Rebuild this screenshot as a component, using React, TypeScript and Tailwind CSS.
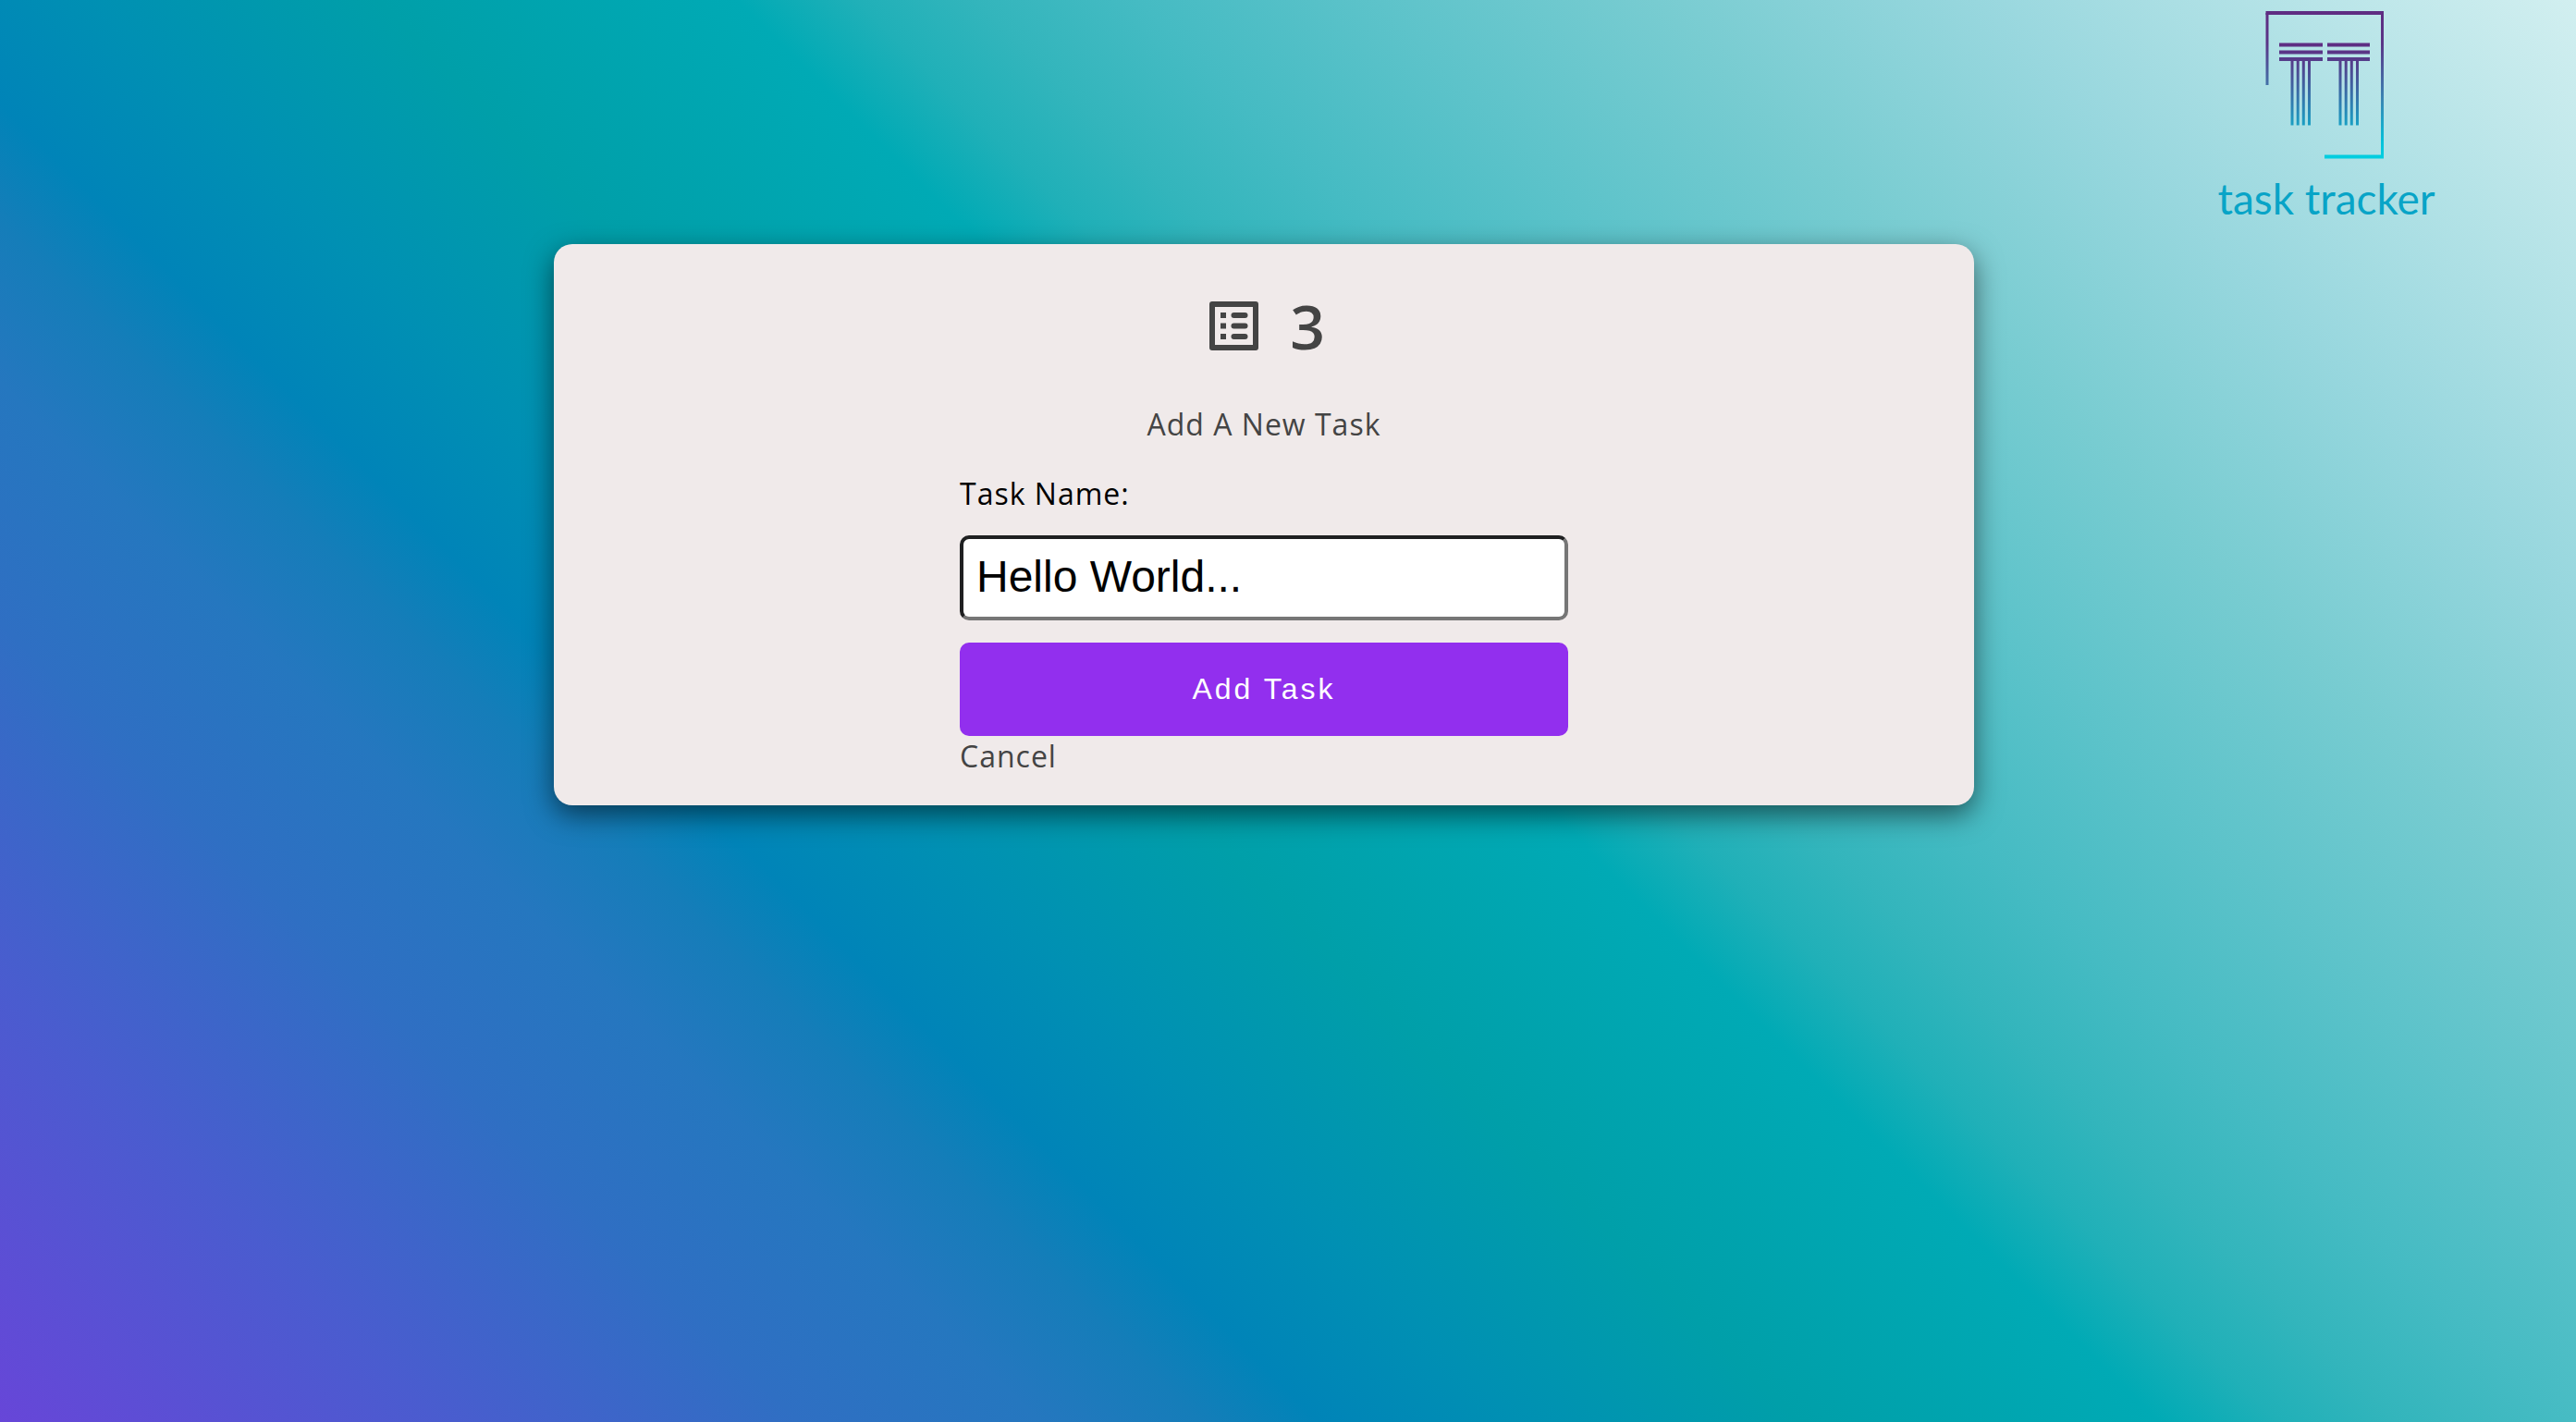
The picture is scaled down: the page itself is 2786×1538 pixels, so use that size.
function Logo() {
  return (
    <div className="flex w-[280px] flex-col items-center">
      <svg viewBox="0 0 280 180" className="h-[180px] w-[280px]" fill="none" aria-hidden="true">
        <defs>
          <linearGradient id="frame" gradientUnits="userSpaceOnUse" x1="0" y1="12" x2="0" y2="172">
            <stop offset="0" stopColor="#5f2c82" />
            <stop offset="0.22" stopColor="#5a3587" />
            <stop offset="0.6" stopColor="#3a86b4" />
            <stop offset="0.9" stopColor="#00c4dc" />
            <stop offset="1" stopColor="#00cfe0" />
          </linearGradient>
          <linearGradient id="columns" gradientUnits="userSpaceOnUse" x1="0" y1="46" x2="0" y2="136">
            <stop offset="0" stopColor="#5f2c82" />
            <stop offset="0.25" stopColor="#543f8c" />
            <stop offset="1" stopColor="#1aa0c4" />
          </linearGradient>
        </defs>
        <path stroke="url(#frame)" strokeWidth="3" d="M72 92V14M196.500 14V170" />
        <path stroke="url(#frame)" strokeWidth="4" d="M70.500 14H198M198 169.500H134" />
        <path
          fill="url(#columns)"
          d="M85 46.500h47v4H85zM137 46.500h46v4H137zM85 54.500h47v4H85zM137 54.500h46v4H137zM85 62h47v4H85zM137 62h46v4H137z"
        />
        <path
          stroke="url(#columns)"
          strokeWidth="3"
          d="M99 64v71.500M105.200 64v71.500M111.300 64v71.500M117.500 64v71.500M151 64v71.500M157.200 64v71.500M163.300 64v71.500M169.500 64v71.500"
        />
      </svg>
      <span className="pr-2 font-['Lato',sans-serif] text-[46px] leading-[70px] font-normal tracking-normal whitespace-nowrap text-[#08a4c7]">
        task tracker
      </span>
    </div>
  );
}

function TaskListIcon() {
  return (
    <svg viewBox="0 0 53 53" className="size-[53px]" fill="currentColor" aria-hidden="true">
      <path
        fillRule="evenodd"
        d="M3 0h47a3 3 0 0 1 3 3v47a3 3 0 0 1-3 3H3a3 3 0 0 1-3-3V3a3 3 0 0 1 3-3zM6 6v41h41V6z"
      />
      <path d="M12 12h6v6h-6zM12 23.500h6v6h-6zM12 35h6v6h-6z" />
      <rect x="23.500" y="12" width="18" height="6" rx="3" />
      <rect x="23.500" y="23.500" width="18" height="6" rx="3" />
      <rect x="23.500" y="35" width="18" height="6" rx="3" />
    </svg>
  );
}

export default function App() {
  return (
    <div
      className="relative flex min-h-screen flex-col bg-[linear-gradient(45deg,#6746d8_0%,#4a5ccf_11%,#2f6fc3_20%,#2577bf_26%,#157db9_30%,#0084b8_33%,#0090b3_38%,#009fa9_45%,#00aab5_54%,#20b0b8_57%,#33b5bc_60%,#45bbc3_64%,#5dc3ca_70%,#78ccd1_77%,#98d7de_85%,#d2eff0_100%)] pt-[264px] pr-[52px] font-['Open_Sans',sans-serif] text-[32px] leading-[43px] tracking-[1px] text-[#444]"
    >
      <header className="absolute top-0 right-[126px]">
        <Logo />
      </header>
      <main className="mx-auto flex w-full max-w-[1536px] flex-col items-center rounded-[20px] bg-[#f0eaea] px-10 pt-[53px] pb-8 shadow-[0_10px_30px_rgba(0,0,0,0.55)]">
        <h1 className="flex h-[70px] items-center gap-[34px] pl-2 text-[66px] leading-[66px] font-semibold">
          <TaskListIcon />
          <span>3</span>
        </h1>
        <h2 className="mt-[50px]">Add A New Task</h2>
        <form className="mt-8 flex w-full max-w-[658px] flex-col" onSubmit={(e) => e.preventDefault()}>
          <label htmlFor="task-name" className="text-black">
            Task Name:
          </label>
          <input
            id="task-name"
            type="text"
            defaultValue="Hello World..."
            className="mt-6 h-[92px] w-full rounded-[10px] border-4 border-t-[#1f2021] border-r-[#767676] border-b-[#767676] border-l-[#1f2021] bg-white px-[14px] pb-1 font-['Liberation_Sans',sans-serif] text-[48px] leading-[56px] tracking-normal text-black outline-none"
          />
          <button
            type="submit"
            className="mt-6 h-[101px] w-full rounded-[10px] bg-[#922fee] font-['Liberation_Sans',sans-serif] text-[32px] tracking-[3px] text-white"
          >
            Add Task
          </button>
          <a href="#" className="self-start">
            Cancel
          </a>
        </form>
      </main>
    </div>
  );
}
